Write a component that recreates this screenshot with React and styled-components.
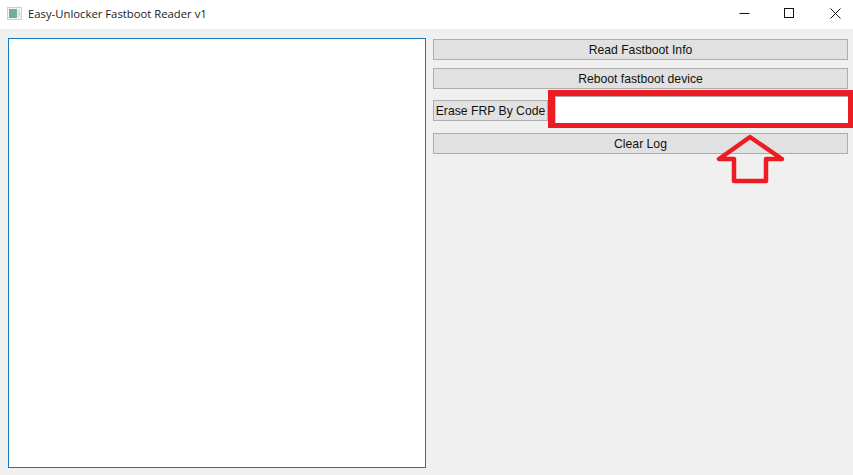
import React from "react";
import styled, { createGlobalStyle } from "styled-components";

const GlobalStyle = createGlobalStyle`
  html, body {
    margin: 0;
    padding: 0;
    height: 100%;
    overflow: hidden;
    background: #f0f0f0;
  }
  #root {
    height: 100%;
  }
`;

const Window = styled.div`
  width: 853px;
  height: 475px;
  display: flex;
  flex-direction: column;
  background: #f0f0f0;
  overflow: hidden;
`;

const TitleBar = styled.div`
  box-sizing: border-box;
  height: 29px;
  flex-shrink: 0;
  display: flex;
  align-items: center;
  background: #ffffff;
  padding: 0 0 3px 7px;
`;

const AppIcon = styled.svg`
  width: 15px;
  height: 13px;
  margin-right: 6px;
  flex-shrink: 0;
`;

const Title = styled.span`
  font-family: "Open Sans", "Noto Sans", sans-serif;
  font-size: 11.3px;
  color: #1a1a1a;
  flex-grow: 1;
  white-space: nowrap;
  padding-top: 1px;
`;

const WindowButtons = styled.div`
  display: flex;
  gap: 9.5px;
`;

const WindowButton = styled.div`
  width: 36px;
  height: 26px;
  display: flex;
  align-items: center;
  justify-content: center;

  svg {
    width: 11px;
    height: 11px;
    display: block;
  }
`;

const Body = styled.div`
  flex-grow: 1;
  display: flex;
  gap: 7px;
  padding: 9px 5px 7px 8px;
  min-height: 0;
`;

const LogBox = styled.div`
  width: 418px;
  box-sizing: border-box;
  flex-shrink: 0;
  background: #ffffff;
  border: 1px solid #1679bd;
`;

const Controls = styled.div`
  flex-grow: 1;
  display: flex;
  flex-direction: column;
  padding-top: 1px;
`;

const ActionButton = styled.button`
  box-sizing: border-box;
  height: 21px;
  padding: 0;
  background: #e1e1e1;
  border: 1px solid #adadad;
  font-family: "Liberation Sans", Arial, sans-serif;
  font-size: 12.2px;
  color: #111111;
  white-space: nowrap;
  margin-bottom: ${(p) => p.$gap || 0}px;
  width: ${(p) => p.$width || "auto"};
  flex-shrink: ${(p) => (p.$width ? 0 : 1)};
`;

const CodeRow = styled.div`
  display: flex;
  height: 21px;
  margin-bottom: 12px;
`;

const CodeField = styled.div`
  position: relative;
  flex-grow: 1;
  margin-left: 5px;
  background: #ffffff;
`;

const Highlight = styled.div`
  position: absolute;
  top: -10px;
  left: -5px;
  right: -5px;
  bottom: -7px;
  box-sizing: border-box;
  border-style: solid;
  border-color: #ed1c24;
  border-width: 6px 5px 5px 7px;
  background: #ffffff;
  box-shadow: inset 0 1px 0 #a8a8a8, inset 1px 0 0 #c8c8c8;
  pointer-events: none;
`;

const ArrowMark = styled.svg`
  position: absolute;
  left: 716px;
  top: 134px;
  width: 70px;
  height: 51px;
  pointer-events: none;
`;

export default function App() {
  return (
    <Window>
      <GlobalStyle />
      <TitleBar>
        <AppIcon viewBox="0 0 15 13">
          <rect x="0" y="0" width="15" height="13" fill="#cfcfcf" />
          <rect x="1" y="1" width="13" height="11" fill="#f4f4f4" />
          <rect x="2" y="2" width="8" height="9" fill="#6fae9d" />
          <rect x="11" y="3" width="2" height="7" fill="#d8dedc" />
        </AppIcon>
        <Title>Easy-Unlocker Fastboot Reader v1</Title>
        <WindowButtons>
          <WindowButton>
            <svg viewBox="0 0 11 11">
              <path d="M0.5 5.5H10.5" stroke="#111" strokeWidth="1" />
            </svg>
          </WindowButton>
          <WindowButton>
            <svg viewBox="0 0 11 11">
              <rect x="0.5" y="0.5" width="9" height="9" fill="none" stroke="#111" strokeWidth="1" />
            </svg>
          </WindowButton>
          <WindowButton>
            <svg viewBox="0 0 11 11">
              <path d="M0.5 0.5L10.5 10.5M10.5 0.5L0.5 10.5" stroke="#111" strokeWidth="1" />
            </svg>
          </WindowButton>
        </WindowButtons>
      </TitleBar>
      <Body>
        <LogBox />
        <Controls>
          <ActionButton $gap={8}>Read Fastboot Info</ActionButton>
          <ActionButton $gap={11}>Reboot fastboot device</ActionButton>
          <CodeRow>
            <ActionButton $width="115px">Erase FRP By Code</ActionButton>
            <CodeField>
              <Highlight />
            </CodeField>
          </CodeRow>
          <ActionButton>Clear Log</ActionButton>
        </Controls>
      </Body>
      <ArrowMark viewBox="0 0 70 51">
        <path
          d="M34 3L3 25H18V47H50V25H66Z"
          fill="none"
          stroke="#ed1c24"
          strokeWidth="4.5"
          strokeLinejoin="round"
        />
      </ArrowMark>
    </Window>
  );
}
